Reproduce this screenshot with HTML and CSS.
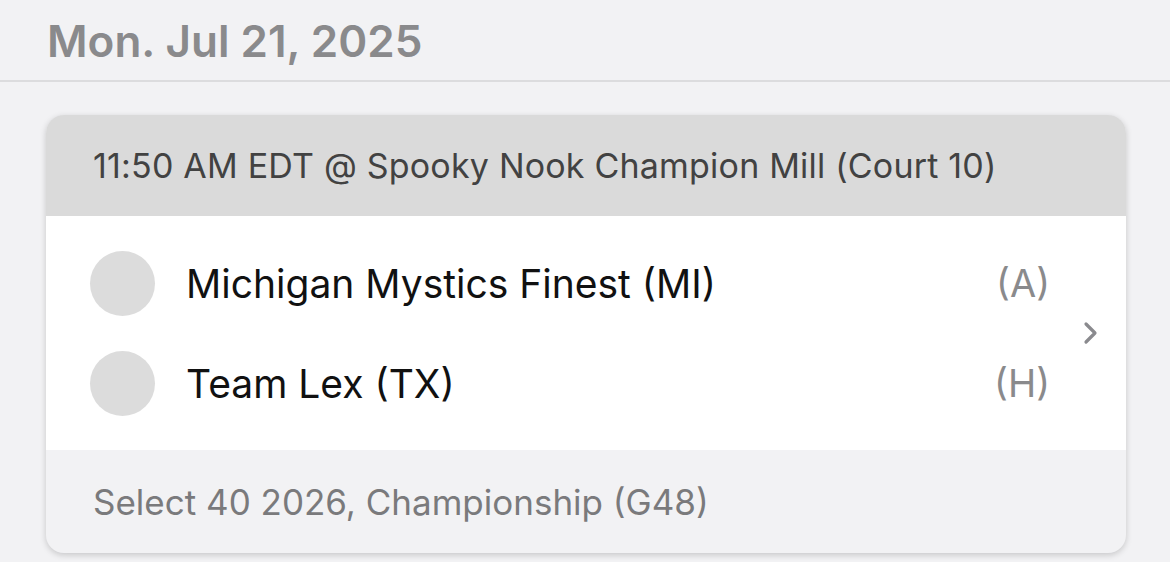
FILE: index.html
```html
<!DOCTYPE html>
<html>
<head>
<meta charset="utf-8">
<link rel="stylesheet" href="styles.css">
</head>
<body>
<div class="page">
  <div class="date-bar">
    <h1 class="date">Mon. Jul 21, 2025</h1>
  </div>
  <div class="card">
    <div class="card-head">11:50 AM EDT @ Spooky Nook Champion Mill (Court 10)</div>
    <div class="card-body">
      <div class="teams">
        <div class="team">
          <span class="logo"></span>
          <span class="name">Michigan Mystics Finest (MI)</span>
          <span class="side">(A)</span>
        </div>
        <div class="team">
          <span class="logo"></span>
          <span class="name">Team Lex (TX)</span>
          <span class="side">(H)</span>
        </div>
      </div>
      <div class="chev">
        <svg width="18" height="28" viewBox="0 0 18 28"><path d="M4 5 L13 14 L4 23" fill="none" stroke="#8a8a8e" stroke-width="3.2" stroke-linecap="round" stroke-linejoin="round"/></svg>
      </div>
    </div>
    <div class="card-foot">Select 40 2026, Championship (G48)</div>
  </div>
</div>
</body>
</html>
```
FILE: styles.css
```css
* { box-sizing: border-box; }
html, body { margin: 0; padding: 0; }
body {
  background: #f2f2f4;
  font-family: Inter, "Noto Sans", sans-serif;
  width: 1170px;
  height: 562px;
  overflow: hidden;
}
.date-bar {
  height: 82px;
  border-bottom: 2px solid #dcdcde;
  padding: 15px 0 0 47px;
}
.date {
  margin: 0;
  font-size: 44px;
  font-weight: 600;
  color: #8a8a8c;
  line-height: 52px;
  letter-spacing: 0;
}
.card {
  margin: 33px 0 0 46px;
  width: 1080px;
  border-radius: 18px;
  overflow: hidden;
  background: #f2f2f4;
  box-shadow: 0 2px 6px rgba(0,0,0,0.18);
}
.card-head {
  background: #dadada;
  height: 101px;
  padding-left: 47px;
  display: flex;
  align-items: center;
  font-size: 34px;
  letter-spacing: 0.2px;
  color: #424242;
}
.card-body {
  background: #fff;
  height: 234px;
  display: flex;
  align-items: center;
  padding: 0 26px 0 44px;
}
.teams {
  flex: 1;
  display: flex;
  flex-direction: column;
  gap: 35px;
  padding-right: 32px;
}
.team {
  display: flex;
  align-items: center;
  height: 65px;
}
.logo {
  width: 65px;
  height: 65px;
  border-radius: 50%;
  background: #dcdcdc;
  flex: none;
}
.name {
  flex: 1;
  margin-left: 31px;
  font-size: 39px;
  color: #111;
}
.side {
  font-size: 38px;
  color: #8a8a8c;
}
.chev { display: flex; align-items: center; }
.card-foot {
  height: 103px;
  display: flex;
  align-items: center;
  padding-left: 47px;
  font-size: 35px;
  color: #7a7a7c;
}
```
